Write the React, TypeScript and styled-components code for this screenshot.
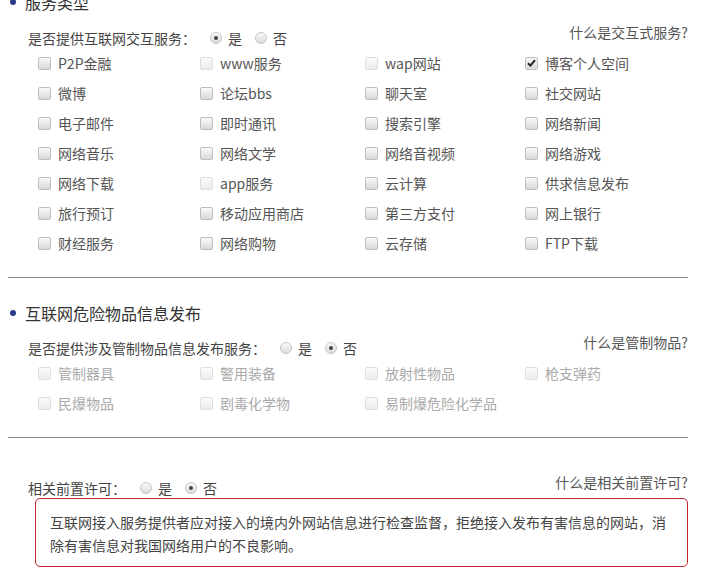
import styled, { createGlobalStyle } from "styled-components";

const GlobalStyle = createGlobalStyle`
  body {
    margin: 0;
    background: #fff;
    font-family: "Noto Sans CJK SC", "Liberation Sans", sans-serif;
    overflow: hidden;
  }
`;

const Page = styled.div`
  margin: 0 14px 0 8px;
  color: #444;
  font-size: 14px;
`;

const SectionTitle = styled.div<{ $first?: boolean }>`
  display: flex;
  align-items: center;
  gap: 9px;
  height: 24px;
  margin-top: ${(p) => (p.$first ? "-10px" : "0")};
  padding-left: 2px;
  font-size: 16px;
  color: #333;
  &::before {
    content: "";
    width: 6px;
    height: 6px;
    border-radius: 50%;
    background: #2e3a8c;
  }
`;

const QuestionRow = styled.div<{ $top?: number }>`
  display: flex;
  justify-content: space-between;
  align-items: flex-start;
  height: 26px;
  margin-top: ${(p) => p.$top ?? 8}px;
  padding-left: 20px;
`;

const Question = styled.div`
  display: flex;
  align-items: center;
  margin-top: 6px;
  line-height: 20px;
  color: #444;
`;

const QuestionLabel = styled.span`
  margin-right: 14px;
`;

const RadioOption = styled.label`
  display: flex;
  align-items: center;
  gap: 6px;
  margin-right: 13px;
`;

const RadioDot = styled.span<{ $on?: boolean }>`
  box-sizing: border-box;
  width: 12px;
  height: 12px;
  border-radius: 50%;
  border: 1px solid #c4c4c4;
  background: linear-gradient(#fafafa, #dcdcdc);
  display: flex;
  align-items: center;
  justify-content: center;
  &::after {
    content: "";
    display: ${(p) => (p.$on ? "block" : "none")};
    width: 4px;
    height: 4px;
    border-radius: 50%;
    background: #444;
  }
`;

const HelpLink = styled.a`
  line-height: 20px;
  color: #555;
  text-decoration: none;
  cursor: pointer;
`;

const Grid = styled.div`
  display: grid;
  grid-template-columns: 162px 165px 160px 1fr;
  padding-left: 30px;
`;

const Item = styled.label<{ $muted?: boolean }>`
  display: flex;
  align-items: center;
  gap: 7px;
  height: 30px;
  color: ${(p) => (p.$muted ? "#aaa" : "#555")};
`;

const Box = styled.span<{ $disabled?: boolean }>`
  box-sizing: border-box;
  width: 13px;
  height: 13px;
  border-radius: 2px;
  border: 1px solid ${(p) => (p.$disabled ? "#dedede" : "#bdbdbd")};
  background: ${(p) =>
    p.$disabled ? "linear-gradient(#fbfbfb, #ececec)" : "linear-gradient(#fafafa, #d9d9d9)"};
  display: flex;
  align-items: center;
  justify-content: center;
`;

const Divider = styled.hr<{ $after: number }>`
  border: 0;
  border-top: 1px solid #8a8a8a;
  margin: 19px 0 ${(p) => p.$after}px;
`;

const Notice = styled.div`
  margin-left: 27px;
  padding: 12px 20px 9px 14px;
  border: 1px solid #c4262e;
  border-radius: 5px;
  line-height: 23px;
  color: #444;
`;

type Opt = { label: string; disabled?: boolean; checked?: boolean };

const services: Opt[] = [
  { label: "P2P金融" },
  { label: "www服务", disabled: true },
  { label: "wap网站", disabled: true },
  { label: "博客个人空间", checked: true },
  { label: "微博" },
  { label: "论坛bbs" },
  { label: "聊天室" },
  { label: "社交网站" },
  { label: "电子邮件" },
  { label: "即时通讯" },
  { label: "搜索引擎" },
  { label: "网络新闻" },
  { label: "网络音乐" },
  { label: "网络文学" },
  { label: "网络音视频" },
  { label: "网络游戏" },
  { label: "网络下载" },
  { label: "app服务", disabled: true },
  { label: "云计算" },
  { label: "供求信息发布" },
  { label: "旅行预订" },
  { label: "移动应用商店" },
  { label: "第三方支付" },
  { label: "网上银行" },
  { label: "财经服务" },
  { label: "网络购物" },
  { label: "云存储" },
  { label: "FTP下载" },
];

const goods: Opt[] = [
  "管制器具",
  "警用装备",
  "放射性物品",
  "枪支弹药",
  "民爆物品",
  "剧毒化学物",
  "易制爆危险化学品",
].map((label) => ({ label, disabled: true }));

const Check = () => (
  <svg width="9" height="8" viewBox="0 0 9 8">
    <path d="M1 4.2 L3.4 6.6 L8 1.2" fill="none" stroke="#222" strokeWidth="2" />
  </svg>
);

const Options = ({ items, muted }: { items: Opt[]; muted?: boolean }) => (
  <Grid>
    {items.map((o) => (
      <Item key={o.label} $muted={muted}>
        <Box $disabled={o.disabled}>{o.checked && <Check />}</Box>
        {o.label}
      </Item>
    ))}
  </Grid>
);

const YesNo = ({ yes }: { yes: boolean }) => (
  <>
    <RadioOption>
      <RadioDot $on={yes} />是
    </RadioOption>
    <RadioOption>
      <RadioDot $on={!yes} />否
    </RadioOption>
  </>
);

export default function App() {
  return (
    <>
      <GlobalStyle />
      <Page>
        <SectionTitle $first>服务类型</SectionTitle>
        <QuestionRow>
          <Question>
            <QuestionLabel>是否提供互联网交互服务：</QuestionLabel>
            <YesNo yes />
          </Question>
          <HelpLink>什么是交互式服务?</HelpLink>
        </QuestionRow>
        <Options items={services} />

        <Divider $after={23} />

        <SectionTitle>互联网危险物品信息发布</SectionTitle>
        <QuestionRow $top={7}>
          <Question>
            <QuestionLabel>是否提供涉及管制物品信息发布服务：</QuestionLabel>
            <YesNo yes={false} />
          </Question>
          <HelpLink>什么是管制物品?</HelpLink>
        </QuestionRow>
        <Options items={goods} muted />

        <Divider $after={0} />

        <QuestionRow $top={34}>
          <Question>
            <QuestionLabel>相关前置许可：</QuestionLabel>
            <YesNo yes={false} />
          </Question>
          <HelpLink>什么是相关前置许可?</HelpLink>
        </QuestionRow>
        <Notice>
          互联网接入服务提供者应对接入的境内外网站信息进行检查监督，拒绝接入发布有害信息的网站，消除有害信息对我国网络用户的不良影响。
        </Notice>
      </Page>
    </>
  );
}
